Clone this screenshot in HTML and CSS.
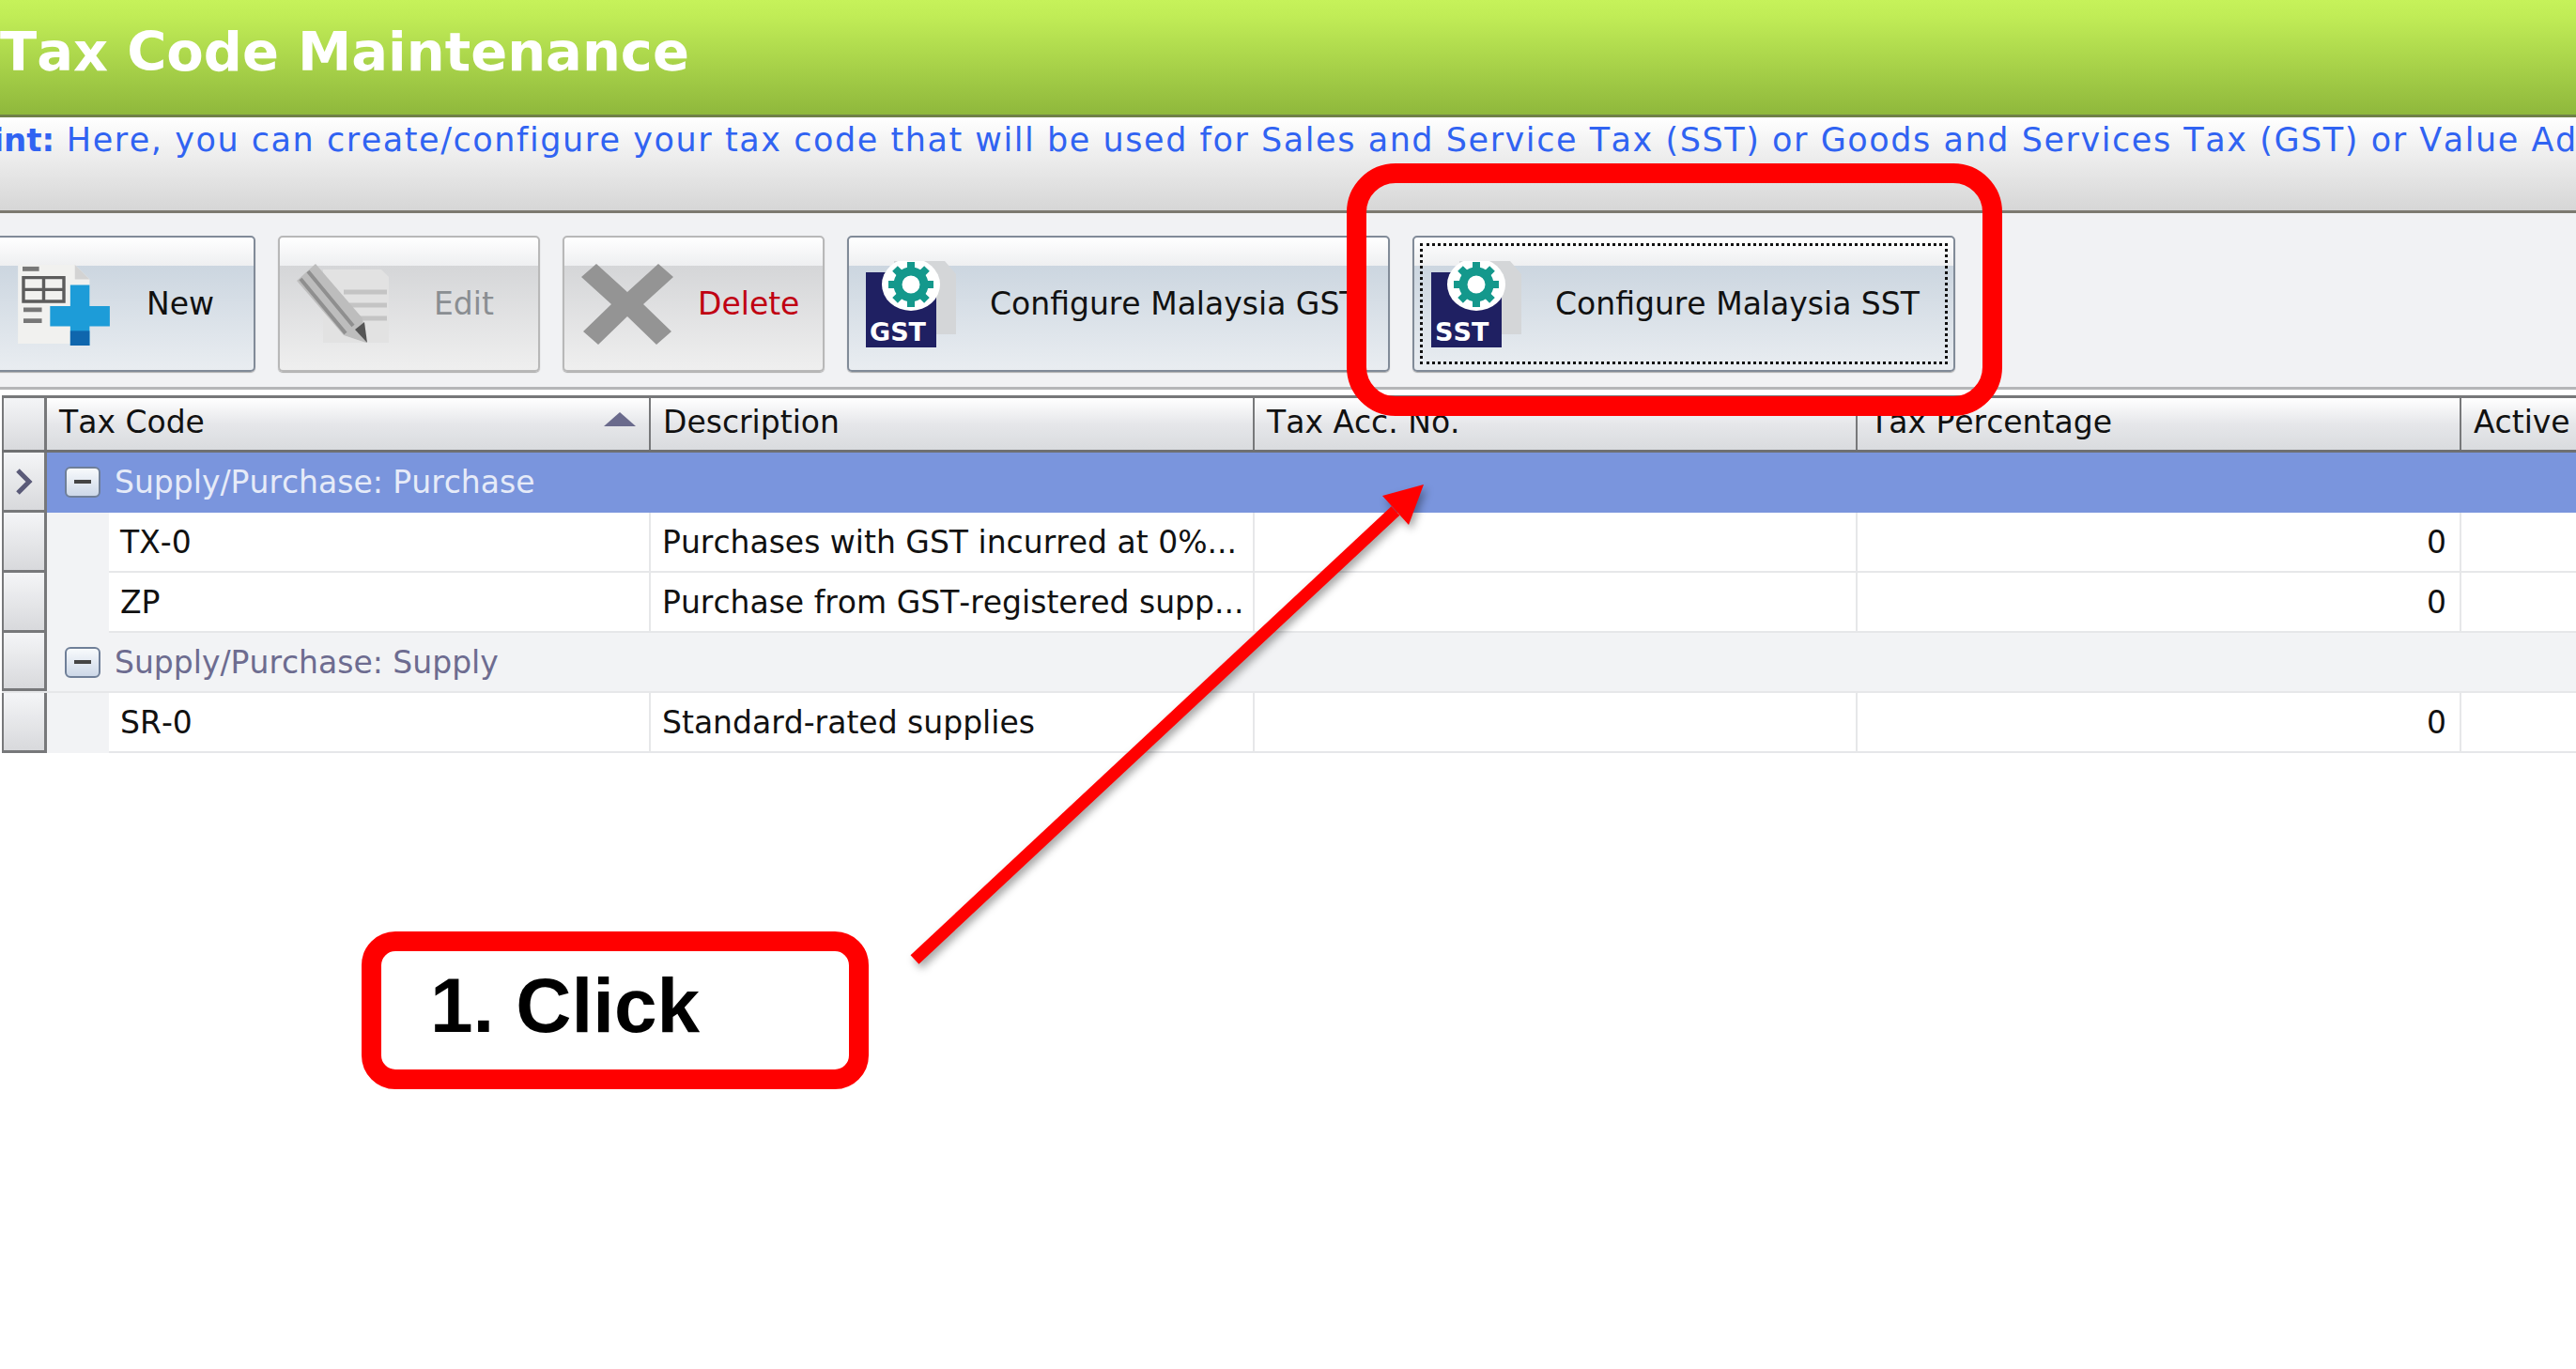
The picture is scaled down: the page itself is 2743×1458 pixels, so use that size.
FILE: index.html
```html
<!DOCTYPE html>
<html lang="en">
<head>
  <meta charset="UTF-8" />
  <title>Tax Code Maintenance</title>
  <link rel="stylesheet" href="styles.css">
</head>
<body>
  <div class="page">
    <div class="title-bar"><h1>Tax Code Maintenance</h1></div>
    <div class="hint-bar"><b>Hint:</b> Here, you can create/configure your tax code that will be used for Sales and Service Tax (SST) or Goods and Services Tax (GST) or Value Added Tax</div>

    <div class="toolbar">
      <button class="tool-btn tool-new hot">
        <svg class="tool-icon" viewBox="0 0 100 90">
          <path d="M0 2H62L78 18V88H0Z" fill="#f1f1ef"/>
          <path d="M62 2L78 18H62Z" fill="#d3d3d3"/>
          <rect x="5" y="4" width="18" height="5" fill="#777"/>
          <path d="M6 16H50V42H6ZM6 29H50M28 16V42" fill="none" stroke="#5c5c5c" stroke-width="3.5"/>
          <path d="M6 51H26M6 63H26" stroke="#777" stroke-width="5"/>
          <path d="M57 34H78V57H100V79H78V100H57V79H35V57H57Z" transform="translate(0 -10)" fill="#1d9cd8"/>
          <path d="M57 74H78V90H57Z" fill="#0f66ad"/>
        </svg>
        <span class="tool-label">New</span>
      </button>
      <button class="tool-btn tool-edit">
        <svg class="tool-icon" viewBox="0 0 100 86">
          <path d="M28 6H90L98 14V84H28Z" fill="#e2e2e2"/>
          <path d="M50 30H96M56 44H96M62 58H96" stroke="#c4c4c4" stroke-width="5"/>
          <path d="M20 0L0 18L50 76L74 84L70 58Z" fill="#bdbdbd"/>
          <path d="M12 8L60 66M4 16L52 74" stroke="#8f8f8f" stroke-width="4"/>
          <path d="M62 70L72 62L75 84Z" fill="#555"/>
        </svg>
        <span class="tool-label label-off">Edit</span>
      </button>
      <button class="tool-btn tool-delete">
        <svg class="tool-icon" viewBox="0 0 98 86">
          <path d="M16 0L49 30L82 0L98 14L66 43L96 72L80 86L49 56L18 86L2 72L32 43L0 14Z" fill="#949494"/>
        </svg>
        <span class="tool-label label-del">Delete</span>
      </button>
      <button class="tool-btn tool-gst hot">
        <svg class="tool-icon" viewBox="0 0 96 92">
          <use href="#tax-doc"/>
          <text x="4" y="85" class="doc-text">GST</text>
        </svg>
        <span class="tool-label">Configure Malaysia GST</span>
      </button>
      <button class="tool-btn tool-sst hot">
        <span class="focus-ring"></span>
        <svg class="tool-icon" viewBox="0 0 96 92">
          <use href="#tax-doc"/>
          <text x="4" y="85" class="doc-text">SST</text>
        </svg>
        <span class="tool-label">Configure Malaysia SST</span>
      </button>
    </div>

    <div class="grid">
      <div class="row head-row">
        <div class="ind"></div>
        <div class="cell col-code head">Tax Code <i class="sort-up"></i></div>
        <div class="cell col-desc head">Description</div>
        <div class="cell col-acc head">Tax Acc. No.</div>
        <div class="cell col-pct head">Tax Percentage</div>
        <div class="cell col-active head">Active</div>
      </div>
      <div class="row group selected">
        <div class="ind"><svg class="caret" viewBox="0 0 20 28"><path d="M3 2L15 14L3 26" fill="none" stroke="#5a5a78" stroke-width="5"/></svg></div>
        <i class="minus"></i>Supply/Purchase: Purchase
      </div>
      <div class="row">
        <div class="ind"></div><div class="indent"></div>
        <div class="cell col-code sub">TX-0</div>
        <div class="cell col-desc">Purchases with GST incurred at 0%...</div>
        <div class="cell col-acc"></div>
        <div class="cell col-pct num">0</div>
        <div class="cell col-active"></div>
      </div>
      <div class="row">
        <div class="ind"></div><div class="indent"></div>
        <div class="cell col-code sub">ZP</div>
        <div class="cell col-desc">Purchase from GST-registered supp...</div>
        <div class="cell col-acc"></div>
        <div class="cell col-pct num">0</div>
        <div class="cell col-active"></div>
      </div>
      <div class="row group">
        <div class="ind"></div>
        <i class="minus"></i>Supply/Purchase: Supply
      </div>
      <div class="row">
        <div class="ind"></div><div class="indent"></div>
        <div class="cell col-code sub">SR-0</div>
        <div class="cell col-desc">Standard-rated supplies</div>
        <div class="cell col-acc"></div>
        <div class="cell col-pct num">0</div>
        <div class="cell col-active"></div>
      </div>
    </div>

    <div class="mark-box"></div>
    <div class="click-note">1. Click</div>
    <svg class="arrow" viewBox="0 0 2743 1458">
      <path d="M974 1022L1486 544" stroke="#f00" stroke-width="13" fill="none"/>
      <path d="M1516 516L1472 528L1500 559Z" fill="#f00"/>
    </svg>
  </div>

  <svg class="defs" width="0" height="0">
    <defs>
      <g id="tax-doc">
        <path d="M30 0H84L96 14V78H30Z" fill="#d4d6d8"/>
        <rect x="0" y="12" width="75" height="80" fill="#1f2062"/>
        <ellipse cx="48" cy="25" rx="31" ry="28" fill="#fff"/>
        <circle cx="48" cy="25" r="14" fill="none" stroke="#14988c" stroke-width="9"/>
        <path d="M48 1V49M24 25H72M31 8L65 42M65 8L31 42" stroke="#14988c" stroke-width="8" stroke-dasharray="7 34"/>
      </g>
    </defs>
  </svg>
</body>
</html>
```

FILE: styles.css
```css
html, body {
  margin: 0;
  padding: 0;
  background: #fff;
}
.page {
  position: relative;
  width: 2743px;
  height: 1458px;
  overflow: hidden;
  font-family: "DejaVu Sans", sans-serif;
  font-kerning: none;
  font-size: 33px;
  color: #111;
}
.title-bar {
  height: 122px;
  display: flex;
  align-items: center;
  background: linear-gradient(#c6f25a, #c0ec56 15%, #8fb83c);
  border-bottom: 3px solid #6f8048;
}
.title-bar h1 {
  margin: 0 0 11px;
  font-size: 57.5px;
  font-weight: bold;
  color: #fff;
  white-space: nowrap;
}
.hint-bar {
  height: 102px;
  box-sizing: border-box;
  margin-left: -36px;
  width: 3000px;
  padding-top: 2px;
  white-space: nowrap;
  font-size: 35px;
  letter-spacing: 1.55px;
  line-height: 44px;
  color: #3063f2;
  background: linear-gradient(#fff, #f0f0f0 35%, #d6d6d6);
  border-bottom: 3px solid #7c7a70;
}
.hint-bar b {
  font-size: 34px;
  letter-spacing: 0;
}
.toolbar {
  display: flex;
  gap: 24px;
  height: 188px;
  box-sizing: border-box;
  padding-top: 24px;
  margin-left: -20px;
  background: #f1f2f4;
  border-bottom: 3px solid #b5b6b8;
}
.tool-btn {
  flex: none;
  position: relative;
  display: flex;
  align-items: center;
  height: 145px;
  padding: 0;
  box-sizing: border-box;
  font: inherit;
  font-kerning: none;
  color: inherit;
  border: 2px solid #b8b8b8;
  border-radius: 5px;
  background: linear-gradient(#fff, #eeeff1 21%, #d5d6d8 21.5%, #efefef);
  box-shadow: 0 1px 1px #aaa;
  text-align: left;
}
.tool-btn.hot {
  border-color: #818b98;
  background: linear-gradient(#fff, #eeeff1 21%, #ccd6e0 21.5%, #e9edf1);
}
.tool-new { width: 292px; }
.tool-edit { width: 279px; }
.tool-delete { width: 279px; }
.tool-gst { width: 578px; }
.tool-sst { width: 578px; }
.tool-icon { flex: none; height: 88px; }
.tool-new .tool-icon { width: 100px; margin: 0 38px 0 36px; }
.tool-edit .tool-icon { width: 100px; margin: 0 46px 0 18px; }
.tool-delete .tool-icon { width: 98px; margin: 0 26px 0 18px; }
.tool-gst .tool-icon, .tool-sst .tool-icon { width: 96px; height: 92px; margin: 0 36px 0 18px; }
.tool-label { white-space: nowrap; }
.label-off { color: #8a8e92; }
.label-del { color: #c00012; }
.focus-ring {
  position: absolute;
  inset: 6px;
  border: 3px dotted #111;
}
.doc-text {
  font-family: "DejaVu Sans", sans-serif;
  font-size: 27px;
  font-weight: bold;
  fill: #fff;
}
.grid {
  margin-top: 6px;
  margin-left: 2px;
  border-top: 3px solid #77787a;
}
.row {
  display: flex;
  align-items: stretch;
  height: 64px;
  white-space: nowrap;
}
.head-row { height: 55px; border-bottom: 3px solid #6f7072; }
.ind {
  flex: none;
  align-self: stretch;
  box-sizing: border-box;
  width: 48px;
  display: flex;
  align-items: center;
  justify-content: center;
  background: linear-gradient(#f4f5f7, #d8d9dc);
  border: solid #77787a;
  border-width: 0 3px 3px 2px;
}
.head-row .ind { border-bottom: 0; }
.caret { width: 20px; height: 28px; }
.indent { flex: none; width: 66px; background: #f2f3f5; }
.cell {
  flex: none;
  box-sizing: border-box;
  display: flex;
  align-items: center;
  padding: 0 12px;
  background: #fff;
  border-right: 2px solid #e6e7e9;
  border-bottom: 2px solid #e6e7e9;
}
.head {
  padding-bottom: 5px;
  padding-left: 13px;
  background: linear-gradient(#fff, #e6e7ea 50%, #d9dbde);
  border-right: 2px solid #77787a;
  border-bottom: 0;
}
.col-code { width: 643px; position: relative; }
.col-code.sub { width: 577px; }
.col-desc { width: 643px; }
.col-acc { width: 642px; }
.col-pct { width: 643px; }
.col-active { width: 200px; border-right: 0; }
.num { justify-content: flex-end; padding-right: 14px; }
.sort-up {
  position: absolute;
  right: 14px;
  top: 15px;
  border: solid transparent;
  border-width: 0 17px 15px;
  border-bottom-color: #6a6a8c;
}
.group {
  align-items: center;
  color: #6d6c90;
  background: #f2f3f5;
  border-bottom: 2px solid #e6e7e9;
  box-sizing: border-box;
}
.group.selected {
  height: 64px;
  padding-bottom: 2px;
  color: #e6ebf8;
  background: #7a95dd;
  border-bottom: 0;
}
.selected .ind { margin-bottom: -2px; }
.minus {
  flex: none;
  position: relative;
  width: 38px;
  height: 33px;
  box-sizing: border-box;
  margin: 0 15px 0 19px;
  border: 2px solid #6f7f98;
  border-radius: 6px;
  background: linear-gradient(#f8fafc, #cdd8e8);
}
.minus::after {
  content: "";
  position: absolute;
  left: 8px;
  right: 8px;
  top: 12px;
  height: 4px;
  background: #444;
}
.mark-box {
  position: absolute;
  left: 1434px;
  top: 174px;
  width: 698px;
  height: 269px;
  box-sizing: border-box;
  border: 21px solid #f00;
  border-radius: 52px;
}
.click-note {
  position: absolute;
  left: 385px;
  top: 992px;
  width: 540px;
  height: 168px;
  box-sizing: border-box;
  display: flex;
  align-items: center;
  padding: 0 0 10px 52px;
  border: 21px solid #f00;
  border-radius: 36px;
  background: #fff;
  font-family: "Liberation Sans", Arial, sans-serif;
  font-size: 82px;
  font-weight: bold;
  color: #000;
}
.arrow {
  position: absolute;
  left: 0;
  top: 0;
  width: 2743px;
  height: 1458px;
  filter: drop-shadow(3px 5px 4px rgba(0, 0, 0, 0.35));
}
.defs { position: absolute; }
```
